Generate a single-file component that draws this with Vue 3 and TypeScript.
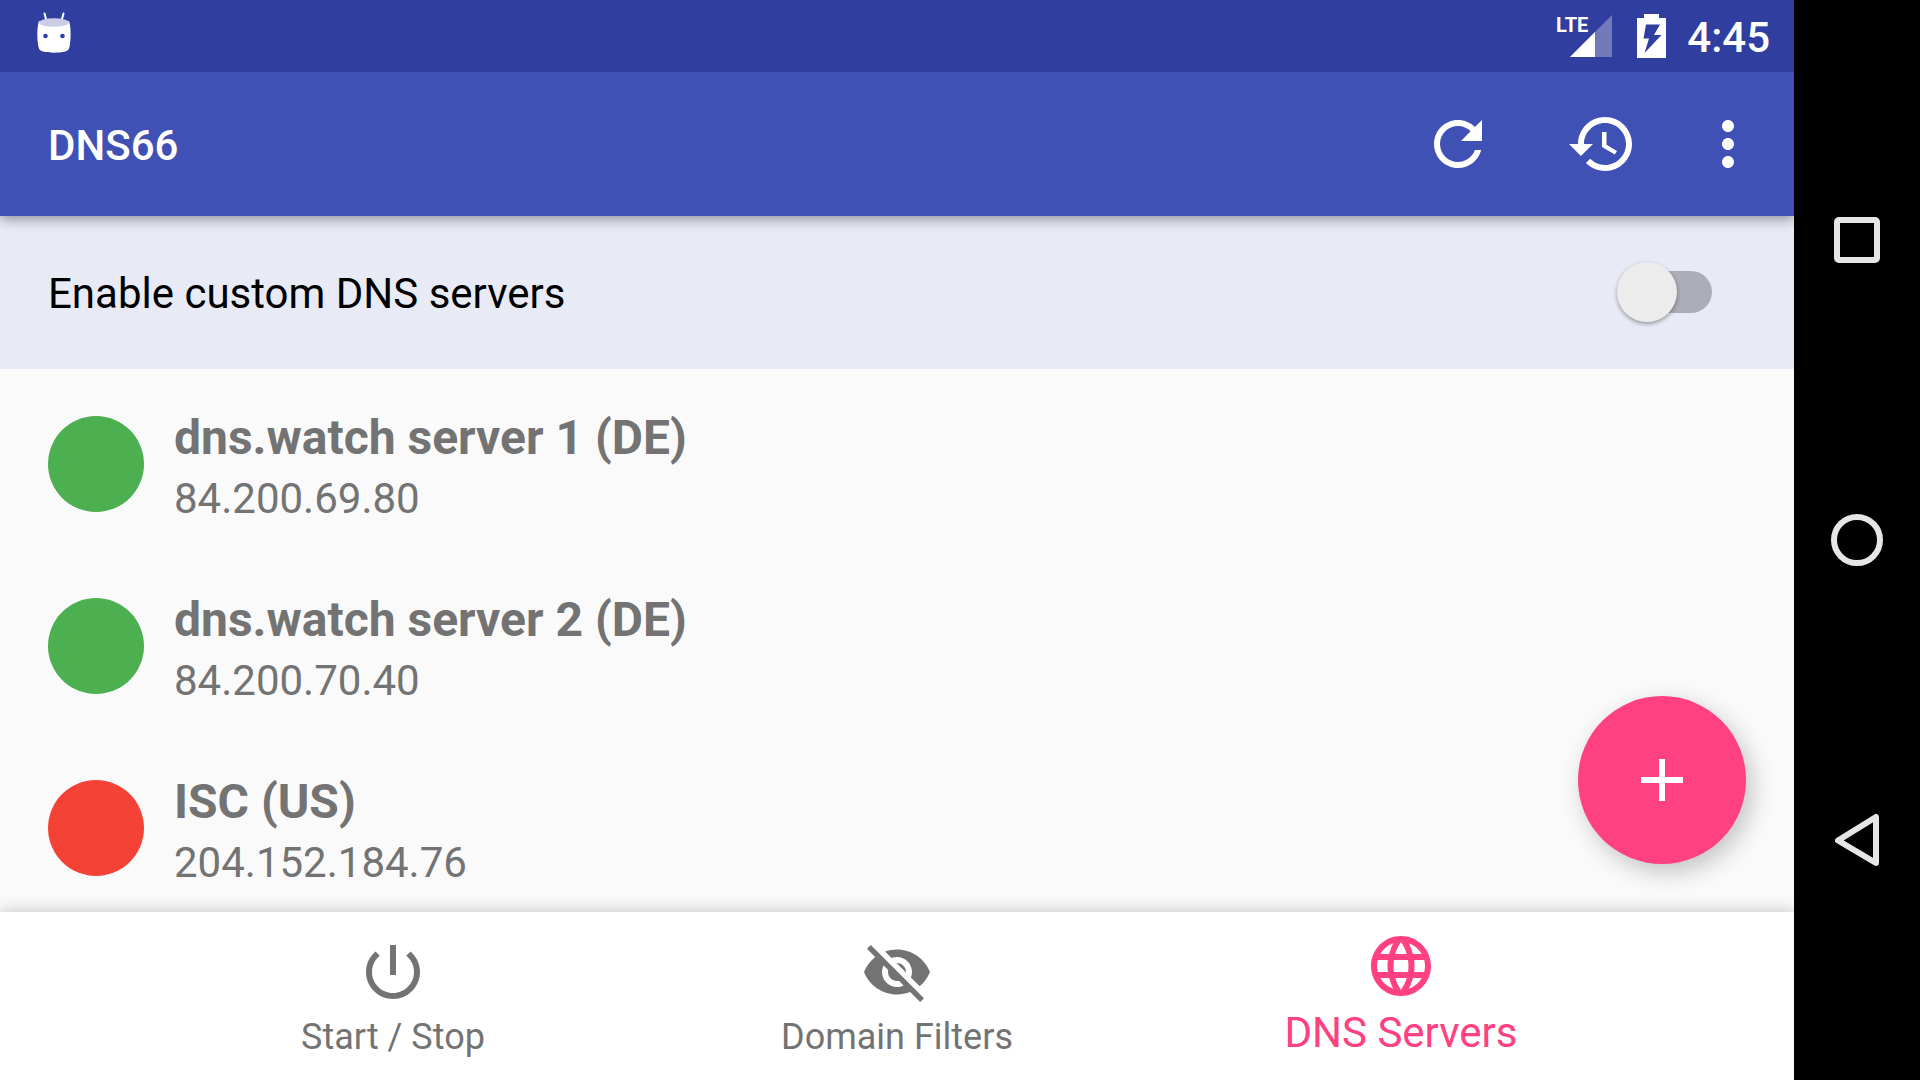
<script setup lang="ts">
import { ref } from 'vue'

interface DnsServer {
  title: string
  address: string
  enabled: boolean
}

interface Tab {
  id: string
  label: string
  icon: string
}

const customServers = ref(false)
const activeTab = ref('dns')

const servers = ref<DnsServer[]>([
  { title: 'dns.watch server 1 (DE)', address: '84.200.69.80', enabled: true },
  { title: 'dns.watch server 2 (DE)', address: '84.200.70.40', enabled: true },
  { title: 'ISC (US)', address: '204.152.184.76', enabled: false },
])

const tabs: Tab[] = [
  {
    id: 'start',
    label: 'Start / Stop',
    icon: 'M13 3h-2v10h2V3zm4.83 2.17l-1.42 1.42C17.99 7.86 19 9.81 19 12c0 3.87-3.13 7-7 7s-7-3.13-7-7c0-2.19 1.01-4.14 2.58-5.42L6.17 5.17C4.23 6.82 3 9.26 3 12c0 4.97 4.03 9 9 9s9-4.03 9-9c0-2.74-1.23-5.18-3.17-6.83z',
  },
  {
    id: 'filters',
    label: 'Domain Filters',
    icon: 'M12 7c2.76 0 5 2.24 5 5 0 .65-.13 1.26-.36 1.83l2.92 2.92c1.51-1.26 2.7-2.89 3.43-4.75-1.73-4.39-6-7.5-11-7.5-1.4 0-2.74.25-3.98.7l2.16 2.16C10.74 7.13 11.35 7 12 7zM2 4.27l2.28 2.28.46.46C3.08 8.3 1.78 10.02 1 12c1.73 4.39 6 7.5 11 7.5 1.55 0 3.03-.3 4.38-.84l.42.42L19.73 22 21 20.73 3.27 3 2 4.27zM7.53 9.8l1.55 1.55c-.05.21-.08.43-.08.65 0 1.66 1.34 3 3 3 .22 0 .44-.03.65-.08l1.55 1.55c-.67.33-1.41.53-2.2.53-2.76 0-5-2.24-5-5 0-.79.2-1.53.53-2.2zm4.31-.78l3.15 3.15.02-.16c0-1.66-1.34-3-3-3l-.17.01z',
  },
  {
    id: 'dns',
    label: 'DNS Servers',
    icon: 'M11.99 2C6.47 2 2 6.48 2 12s4.47 10 9.99 10C17.52 22 22 17.52 22 12S17.52 2 11.99 2zm6.93 6h-2.95c-.32-1.25-.78-2.45-1.38-3.56 1.84.63 3.37 1.91 4.33 3.56zM12 4.04c.83 1.2 1.48 2.53 1.91 3.96h-3.82c.43-1.43 1.08-2.76 1.91-3.96zM4.26 14C4.1 13.36 4 12.69 4 12s.1-1.36.26-2h3.38c-.08.66-.14 1.32-.14 2 0 .68.06 1.34.14 2H4.26zm.82 2h2.95c.32 1.25.78 2.45 1.38 3.56-1.84-.63-3.37-1.9-4.33-3.56zm2.95-8H5.08c.96-1.66 2.49-2.93 4.33-3.56C8.81 5.55 8.35 6.75 8.03 8zM12 19.96c-.83-1.2-1.48-2.53-1.91-3.96h3.82c-.43 1.43-1.08 2.76-1.91 3.96zM14.34 14H9.66c-.09-.66-.16-1.32-.16-2 0-.68.07-1.35.16-2h4.68c.09.65.16 1.32.16 2 0 .68-.07 1.34-.16 2zm.25 5.56c.6-1.11 1.06-2.31 1.38-3.56h2.95c-.96 1.65-2.49 2.93-4.33 3.56zM16.36 14c.08-.66.14-1.32.14-2 0-.68-.06-1.34-.14-2h3.38c.16.64.26 1.31.26 2s-.1 1.36-.26 2h-3.38z',
  },
]
</script>

<template>
  <div class="device">
    <div class="app">
      <header class="top">
        <div class="status-bar">
          <svg class="droid" width="36" height="42" viewBox="0 0 36 42" aria-hidden="true">
            <path d="M8.500 1.500 10.500 9M27.500 1.500 25.500 9" stroke="#fff" stroke-width="2" stroke-linecap="round" />
            <path d="M3 9C1 14 .8 27 2.500 35c.6 3 2.500 4 4.500 4.500 6 1.600 16 1.600 22 0 2-.5 3.900-1.500 4.500-4.500C35.200 27 35 14 33 9z" fill="#fff" />
            <ellipse cx="18" cy="10.500" rx="15" ry="4.300" fill="#cbcee6" />
            <circle cx="9.500" cy="24" r="2.300" fill="#303f9f" />
            <circle cx="26.500" cy="24" r="2.300" fill="#303f9f" />
          </svg>
          <div class="status-icons">
            <div class="signal">
              <span class="network">LTE</span>
              <svg width="42" height="42" viewBox="0 0 42 42" aria-hidden="true">
                <path d="M42 0V42H0z" fill="#7179bb" />
                <path d="M25 17V42H0z" fill="#fff" />
              </svg>
            </div>
            <svg class="battery" width="29" height="44" viewBox="0 0 29 44" aria-hidden="true">
              <path d="M7 0H22V4H29V44H0V4H7z" fill="#fff" />
              <path d="M9 10.500H23L17 21H24.500L7.500 39 12 24.500H6.500z" fill="#303f9f" />
            </svg>
            <time class="clock">4:45</time>
          </div>
        </div>
        <div class="toolbar">
          <h1 class="app-title">DNS66</h1>
          <div class="actions">
            <button type="button" class="action" aria-label="Refresh">
              <svg class="icon" viewBox="0 0 24 24"><path d="M17.650 6.350C16.200 4.900 14.210 4 12 4c-4.420 0-7.990 3.580-7.990 8s3.570 8 7.990 8c3.730 0 6.840-2.550 7.730-6h-2.080c-.82 2.330-3.040 4-5.650 4-3.310 0-6-2.690-6-6s2.690-6 6-6c1.660 0 3.140.69 4.220 1.780L13 11h7V4l-2.350 2.350z" /></svg>
            </button>
            <button type="button" class="action" aria-label="Restore">
              <svg class="icon" viewBox="0 0 24 24"><path d="M13 3c-4.970 0-9 4.030-9 9H1l3.890 3.890.07.14L9 12H6c0-3.870 3.130-7 7-7s7 3.130 7 7-3.130 7-7 7c-1.930 0-3.680-.79-4.940-2.060l-1.420 1.420C8.270 19.990 10.510 21 13 21c4.970 0 9-4.030 9-9s-4.030-9-9-9zm-1 5v5l4.280 2.540.72-1.210-3.500-2.080V8H12z" /></svg>
            </button>
            <button type="button" class="action action-more" aria-label="More options">
              <svg class="icon" viewBox="0 0 24 24"><path d="M12 8c1.100 0 2-.9 2-2s-.9-2-2-2-2 .9-2 2 .9 2 2 2zm0 2c-1.100 0-2 .9-2 2s.9 2 2 2 2-.9 2-2-.9-2-2-2zm0 6c-1.100 0-2 .9-2 2s.9 2 2 2 2-.9 2-2-.9-2-2-2z" /></svg>
            </button>
          </div>
        </div>
      </header>

      <div class="custom-row">
        <label for="custom-dns">Enable custom DNS servers</label>
        <input id="custom-dns" v-model="customServers" class="switch" type="checkbox" role="switch" />
      </div>

      <main class="content">
        <ul class="servers">
          <li v-for="server in servers" :key="server.address" class="server">
            <span class="state" :class="{ on: server.enabled }"></span>
            <div class="details">
              <h2 class="name">{{ server.title }}</h2>
              <p class="address">{{ server.address }}</p>
            </div>
          </li>
        </ul>
        <button type="button" class="fab" aria-label="Add server">
          <svg class="icon" viewBox="0 0 24 24"><path d="M19 13h-6v6h-2v-6H5v-2h6V5h2v6h6v2z" /></svg>
        </button>
      </main>

      <nav class="tabs">
        <button
          v-for="tab in tabs"
          :key="tab.id"
          type="button"
          class="tab"
          :class="{ active: tab.id === activeTab }"
          @click="activeTab = tab.id"
        >
          <svg class="icon" viewBox="0 0 24 24"><path :d="tab.icon" /></svg>
          <span class="tab-label">{{ tab.label }}</span>
        </button>
      </nav>
    </div>

    <aside class="system-nav">
      <button type="button" class="key" aria-label="Overview">
        <svg width="54" height="54" viewBox="0 0 54 54"><rect x="7" y="7" width="40" height="40" rx="2" /></svg>
      </button>
      <button type="button" class="key" aria-label="Home">
        <svg width="54" height="54" viewBox="0 0 54 54"><circle cx="27" cy="27" r="23" /></svg>
      </button>
      <button type="button" class="key" aria-label="Back">
        <svg width="54" height="54" viewBox="0 0 54 54"><path d="M46 4V50L8 27.500z" stroke-linejoin="round" /></svg>
      </button>
    </aside>
  </div>
</template>

<style>
body {
  margin: 0;
}
</style>

<style scoped>
.device {
  display: flex;
  height: 100vh;
  background: #000;
  font-family: Roboto, 'Liberation Sans', sans-serif;
  font-size: 42px;
}

button {
  margin: 0;
  padding: 0;
  border: 0;
  background: none;
  color: inherit;
  font: inherit;
  cursor: pointer;
}

svg {
  display: block;
}

.icon {
  width: 72px;
  height: 72px;
  fill: currentColor;
}

.app {
  display: flex;
  flex: 1;
  flex-direction: column;
  min-width: 0;
  overflow: hidden;
  background: #fafafa;
}

.top {
  position: relative;
  z-index: 1;
  color: #fff;
  background: #3f51b5;
  box-shadow: 0 3px 12px rgba(0, 0, 0, 0.4);
}

.status-bar {
  display: flex;
  align-items: center;
  justify-content: space-between;
  height: 72px;
  padding: 0 24px 0 36px;
  background: #303f9f;
}

.droid {
  margin-bottom: 6px;
}

.status-icons,
.signal {
  display: flex;
  align-items: center;
}

.network {
  align-self: flex-start;
  margin-right: -18px;
  font-family: 'Liberation Sans Narrow', Roboto, sans-serif;
  font-size: 20px;
  font-weight: 700;
  line-height: 20px;
}

.battery {
  margin: 0 21px 0 25px;
}

.clock {
  padding-top: 2px;
  font-weight: 500;
}

.toolbar {
  display: flex;
  align-items: center;
  justify-content: space-between;
  height: 144px;
  padding: 0 12px 0 48px;
}

.app-title {
  margin: 0;
  padding-top: 2px;
  font-size: 42px;
  font-weight: 500;
}

.actions {
  display: flex;
}

.action {
  display: grid;
  place-items: center;
  width: 144px;
  height: 144px;
}

.action-more {
  width: 108px;
}

.custom-row {
  display: flex;
  align-items: flex-end;
  justify-content: space-between;
  padding: 46px 81px 47px 48px;
  color: #000;
  background: #e8eaf6;
  line-height: 56px;
}

.switch {
  position: relative;
  width: 96px;
  height: 60px;
  margin: 0;
  appearance: none;
  cursor: pointer;
}

.switch::before {
  position: absolute;
  inset: 9px 1px 9px 14px;
  border-radius: 21px;
  background: #adadb8;
  content: '';
}

.switch::after {
  position: absolute;
  top: 0;
  left: 0;
  width: 60px;
  height: 60px;
  border-radius: 50%;
  background: #ececec;
  box-shadow: 0 2px 4px rgba(0, 0, 0, 0.35);
  content: '';
}

.switch:checked::after {
  left: 36px;
  background: #ff4081;
}

.content {
  position: relative;
  flex: 1;
  min-height: 0;
}

.servers {
  height: 100%;
  box-sizing: border-box;
  margin: 0;
  padding: 8px 48px 0;
  overflow: hidden;
  list-style: none;
}

.server {
  display: flex;
  gap: 30px;
  padding: 31px 0 29px;
  color: #737373;
}

.state {
  width: 96px;
  height: 96px;
  margin-top: 8px;
  border-radius: 50%;
  background: #f44336;
}

.state.on {
  background: #4caf50;
}

.name,
.address {
  margin: 0;
}

.name {
  font-size: 48px;
  font-weight: 700;
  line-height: 60px;
}

.address {
  line-height: 62px;
}

.fab {
  position: absolute;
  right: 48px;
  bottom: 48px;
  display: grid;
  place-items: center;
  width: 168px;
  height: 168px;
  border-radius: 50%;
  color: #fff;
  background: #ff4081;
  box-shadow: 6px 8px 24px rgba(0, 0, 0, 0.22);
}

.tabs {
  position: relative;
  display: flex;
  justify-content: center;
  height: 168px;
  background: #fff;
  box-shadow: 0 0 16px rgba(0, 0, 0, 0.24);
}

.tab {
  display: flex;
  flex: 1;
  flex-direction: column;
  align-items: center;
  max-width: 504px;
  padding-top: 24px;
  color: #737373;
  font-size: 36px;
  line-height: 58px;
}

.tab.active {
  padding-top: 18px;
  color: #ff4081;
  font-size: 42px;
  line-height: 62px;
}

.system-nav {
  display: flex;
  flex-direction: column;
  width: 126px;
  padding: 90px 0;
  box-sizing: border-box;
}

.key {
  display: grid;
  flex: 1;
  place-items: center;
}

.key svg {
  fill: none;
  stroke: #e6e6e6;
  stroke-width: 6px;
}
</style>
